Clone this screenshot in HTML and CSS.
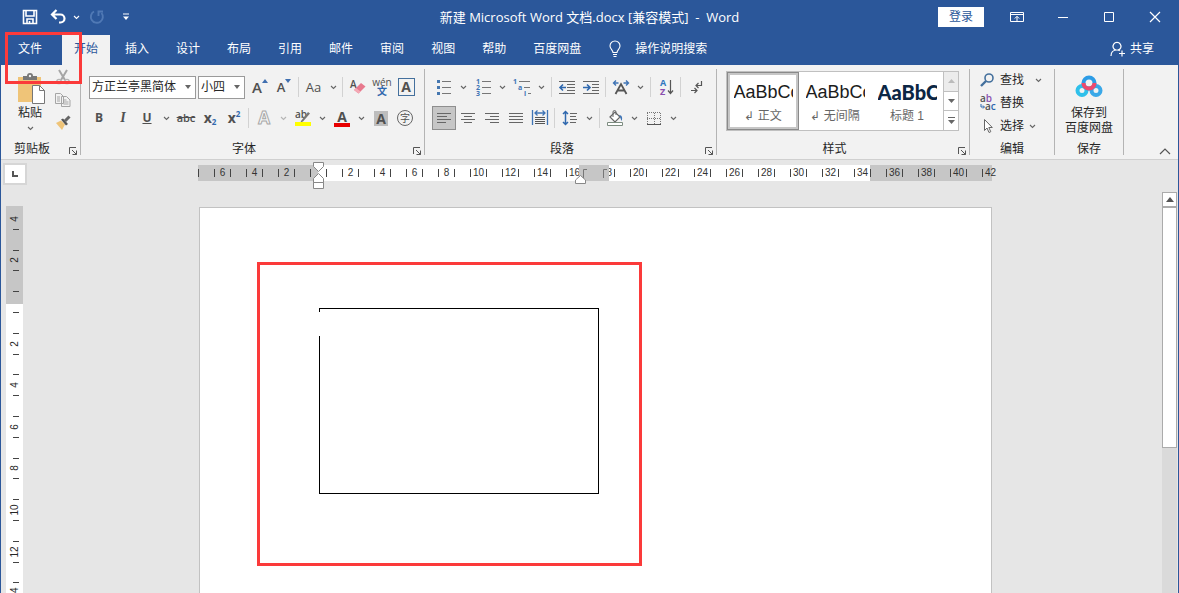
FILE: index.html
```html
<!DOCTYPE html>
<html lang="zh-CN">
	<head>
		<meta charset="utf-8" />
		<title>新建 Microsoft Word 文档.docx - Word</title>
		<link rel="stylesheet" href="styles.css">
	</head>
	<body>
		<!-- flecha pequeña de los desplegables -->
		<svg width="0" height="0" class="oculto">
			<symbol id="chev" viewBox="0 0 7 5"><path d="M1 1l2.500 2.500L6 1" fill="none" stroke="currentColor" stroke-width="1.100"/></symbol>
			<symbol id="launch" viewBox="0 0 10 10"><path d="M1.500 8V1.500H8M4 4l4.500 4.500M8.500 4.500v4h-4" fill="none" stroke="#555"/></symbol>
		</svg>

		<header class="titulo">
			<div class="rapido">
				<button class="save" aria-label="保存"><svg width="16" height="16" viewBox="0 0 16 16"><path d="M1.500 1.500h13v13h-13zM4 2v5h8V2M5 14v-4h6v4M7.500 12v2" fill="none" stroke="#fff" stroke-width="1.600"/></svg></button>
				<button class="undo" aria-label="撤消"><svg width="18" height="16" viewBox="0 0 18 16"><path d="M2 5.500h8.500a4 4 0 0 1 0 8H9M6.500 1L2 5.500 6.500 10" fill="none" stroke="#fff" stroke-width="2.200"/></svg></button>
				<button class="chev-b" aria-label="撤消选项"><svg width="7" height="5"><use href="#chev"/></svg></button>
				<button class="redo" aria-label="重复"><svg width="16" height="16" viewBox="0 0 16 16"><path d="M5 2.500A6 6 0 1 0 12.500 4M9.500 7V2.500H14" fill="none" stroke="#5079b5" stroke-width="1.900"/></svg></button>
				<button class="mas" aria-label="自定义"><svg width="8" height="8" viewBox="0 0 8 8"><path d="M1 1h6" stroke="#fff"/><path d="M1 3.500h6L4 7z" fill="#fff"/></svg></button>
			</div>
			<h1>新建 Microsoft Word 文档.docx [兼容模式]&nbsp; -&nbsp; Word</h1>
			<div class="ventana">
				<button class="login">登录</button>
				<button aria-label="功能区显示选项"><svg width="14" height="12" viewBox="0 0 14 12"><path d="M.5 1.500h13v9H.5zM.5 3.500h13M7 10V5.500M4.800 7.500L7 5.300l2.200 2.200" fill="none" stroke="#fff"/></svg></button>
				<button aria-label="最小化"><svg width="12" height="12" viewBox="0 0 12 12"><path d="M1 6.500h10" stroke="#fff"/></svg></button>
				<button aria-label="最大化"><svg width="12" height="12" viewBox="0 0 12 12"><path d="M1.500 1.500h9v9h-9z" fill="none" stroke="#fff"/></svg></button>
				<button aria-label="关闭"><svg width="12" height="12" viewBox="0 0 12 12"><path d="M1 1l10 10M11 1L1 11" stroke="#fff" stroke-width="1.200"/></svg></button>
			</div>
		</header>

		<nav class="pestanas">
			<a href="#" class="archivo">文件</a>
			<a href="#" class="activa">开始</a>
			<a href="#">插入</a>
			<a href="#">设计</a>
			<a href="#">布局</a>
			<a href="#">引用</a>
			<a href="#">邮件</a>
			<a href="#">审阅</a>
			<a href="#">视图</a>
			<a href="#">帮助</a>
			<a href="#">百度网盘</a>
			<a href="#" class="buscar"><svg width="14" height="18" viewBox="0 0 14 18"><path d="M5 12.500c0-2.500-3-3.500-3-6.500a5 5 0 0 1 10 0c0 3-3 4-3 6.500zM5 14.500h4M5.500 16.500h3" fill="none" stroke="#fff" stroke-width="1.100"/></svg>操作说明搜索</a>
			<a href="#" class="compartir"><svg width="16" height="16" viewBox="0 0 16 16"><path d="M1 15c0-4 2.500-6 6-6 1 0 2 .2 3 .8M8 9.200a4 4 0 1 0-2 0M12 9.500v6M9 12.500h6" fill="none" stroke="#fff" stroke-width="1.200"/></svg>共享</a>
			<span class="marca-archivo"></span>
		</nav>

		<section class="cinta">
			<!-- portapapeles -->
			<div class="grupo portapapeles">
				<div class="cuerpo">
					<button class="pegar">
						<svg width="30" height="32" viewBox="0 0 30 32"><path d="M3 5h23v25H3z" fill="#efc478"/><path d="M8 8V4h4a3 3 0 0 1 6 0h4v4z" fill="#777"/><circle cx="15" cy="4" r="1.200" fill="#f2f2f2"/><path d="M17.500 13.500h7l5 5v13h-12z" fill="#fff" stroke="#777"/><path d="M24.500 13.500v5h5" fill="none" stroke="#777"/></svg>
						<span>粘贴</span>
						<svg width="7" height="5"><use href="#chev"/></svg>
					</button>
					<div class="pila">
						<button aria-label="剪切"><svg width="16" height="16" viewBox="0 0 16 16"><path d="M4 1l6 10M12 1L6 11" fill="none" stroke="#a5a5a5" stroke-width="2"/><circle cx="4" cy="12.500" r="2.200" fill="none" stroke="#b5b5b5" stroke-width="1.300"/><circle cx="12" cy="12.500" r="2.200" fill="none" stroke="#b5b5b5" stroke-width="1.300"/></svg></button>
						<button aria-label="复制"><svg width="16" height="16" viewBox="0 0 16 16"><path d="M.5 1.500h5l3 3v7h-8zM6.500 4.500h5l3.500 3.500v6.500H6.500z" fill="#f2f2f2" stroke="#a5a5a5"/><path d="M2 5h3M2 7h3M2 9h3M8.500 8h3M8.500 10h5M8.500 12h5" stroke="#a5a5a5"/></svg></button>
						<button aria-label="格式刷"><svg width="16" height="16" viewBox="0 0 16 16"><path d="M1 8l5-2.500 4 4L7 15z" fill="#efc478"/><path d="M6 4.500l2-1 5 5.500-2 1.500z" fill="#555"/><path d="M10 6l4.500-4.500" stroke="#666" stroke-width="3"/></svg></button>
					</div>
				</div>
				<div class="pie">剪贴板<button class="lanzar" aria-label="剪贴板设置"><svg width="10" height="10"><use href="#launch"/></svg></button></div>
			</div>

			<!-- fuente -->
			<div class="grupo fuente">
				<div class="cuerpo filas">
					<div class="fila">
						<button class="combo nombre">方正兰亭黑简体<i></i></button>
						<button class="combo tam">小四<i></i></button>
						<button class="ic a1">A<svg width="6" height="4" viewBox="0 0 6 4"><path d="M0 4l3-4 3 4z" fill="#3f6fb0"/></svg></button>
						<button class="ic a2">A<svg width="6" height="4" viewBox="0 0 6 4"><path d="M0 0l3 4 3-4z" fill="#3f6fb0"/></svg></button>
						<hr>
						<button class="split aa"><span>Aa</span><svg width="7" height="5"><use href="#chev"/></svg></button>
						<hr>
						<button class="ic borrar" aria-label="清除格式"><svg width="18" height="18" viewBox="0 0 18 18"><text x="1" y="10" class="t11">A</text><path d="M5 12l7-7 4.500 3.500-7 7z" fill="#e8798d"/><path d="M5 12l2-2 4.500 3.500-2 2z" fill="#f4a9b5"/></svg></button>
						<button class="ic wen"><span>wén</span><b>文</b></button>
						<button class="ic"><span class="marco">A</span></button>
					</div>
					<div class="fila">
						<button class="ic"><b>B</b></button>
						<button class="ic cursiva">I</button>
						<button class="split"><span class="sub">U</span><svg width="7" height="5"><use href="#chev"/></svg></button>
						<button class="ic tachado">abc</button>
						<button class="ic equis"><b>x</b><small class="abajo">2</small></button>
						<button class="ic equis"><b>x</b><small class="arriba">2</small></button>
						<hr>
						<button class="split gris"><span class="hueca">A</span><svg width="7" height="5"><use href="#chev"/></svg></button>
						<button class="split"><svg width="18" height="18" viewBox="0 0 18 18"><text x="1" y="9" class="t11">ab</text><path d="M7 12l7-9 2 1.500-7 8-2.500 1z" fill="#777"/><path d="M1 13h16v4H1z" fill="#ff0"/></svg><svg width="7" height="5"><use href="#chev"/></svg></button>
						<button class="split"><span class="color">A</span><svg width="7" height="5"><use href="#chev"/></svg></button>
						<button class="ic"><span class="sombra">A</span></button>
						<button class="ic"><span class="circulo">字</span></button>
					</div>
				</div>
				<div class="pie">字体<button class="lanzar" aria-label="字体设置"><svg width="10" height="10"><use href="#launch"/></svg></button></div>
			</div>

			<!-- párrafo -->
			<div class="grupo parrafo">
				<div class="cuerpo filas">
					<div class="fila">
						<button class="split" aria-label="项目符号"><svg width="18" height="18" viewBox="0 0 18 18"><path d="M7 3.500h9M7 9.500h9M7 15.500h9" stroke="#777"/><path d="M2 2h3v3H2zM2 8h3v3H2zM2 14h3v3H2z" fill="#4577b0"/></svg><svg width="7" height="5"><use href="#chev"/></svg></button>
						<button class="split" aria-label="编号"><svg width="18" height="18" viewBox="0 0 18 18"><path d="M8 3.500h9M8 9.500h9M8 15.500h9" stroke="#777"/><text x="2" y="6" class="t7">1</text><text x="2" y="12" class="t7">2</text><text x="2" y="18" class="t7">3</text></svg><svg width="7" height="5"><use href="#chev"/></svg></button>
						<button class="split" aria-label="多级列表"><svg width="18" height="18" viewBox="0 0 18 18"><path d="M6 3.500h11M11 9.500h6M15 15.500h3" stroke="#777"/><text x="0" y="6" class="t7">1</text><text x="5" y="12" class="t7">a</text><text x="11" y="18" class="t7">i</text></svg><svg width="7" height="5"><use href="#chev"/></svg></button>
						<hr>
						<button class="ic" aria-label="减少缩进"><svg width="18" height="16" viewBox="0 0 18 16"><path d="M1 2.500h16M9 5.500h8M9 8.500h8M9 11.500h8M1 14.500h16" stroke="#666"/><path d="M8 8.500H2M5 5.500l-3 3 3 3" fill="none" stroke="#2f68ae" stroke-width="1.600"/></svg></button>
						<button class="ic" aria-label="增加缩进"><svg width="18" height="16" viewBox="0 0 18 16"><path d="M1 2.500h16M10 5.500h7M10 8.500h7M10 11.500h7M1 14.500h16" stroke="#666"/><path d="M1 8.500h7M5 5.500l3 3-3 3" fill="none" stroke="#2f68ae" stroke-width="1.600"/></svg></button>
						<hr>
						<button class="split" aria-label="中文版式"><svg width="18" height="16" viewBox="0 0 18 16"><path d="M3.500 15L9 5l5.500 10M5.500 11.500h7" fill="none" stroke="#555" stroke-width="1.800"/><path d="M6.500 4H2M4 1.500L1.500 4 4 6.500M11.500 4H16M14 1.500L16.500 4 14 6.500" fill="none" stroke="#3f74b5" stroke-width="1.400"/></svg><svg width="7" height="5"><use href="#chev"/></svg></button>
						<hr>
						<button class="ic" aria-label="排序"><svg width="18" height="18" viewBox="0 0 18 18"><text x="3" y="8" class="az">A</text><text x="3" y="17" class="az z">Z</text><path d="M13.500 2v13M11 12.500l2.500 3 2.500-3" fill="none" stroke="#555" stroke-width="1.200"/></svg></button>
						<hr>
						<button class="ic" aria-label="显示编辑标记"><svg width="16" height="16" viewBox="0 0 16 16"><path d="M13.500 2v4.500H8M10.500 4L8 6.500 10.500 9M3 11.500h6M6.500 9L9 11.500 6.500 14" fill="none" stroke="#555" stroke-width="1.200"/></svg></button>
					</div>
					<div class="fila">
						<button class="ic pulsado" aria-label="左对齐"><svg width="16" height="14" viewBox="0 0 16 14"><path d="M1 2.500h14M1 5.500h10M1 8.500h14M1 11.500h9" stroke="#666"/></svg></button>
						<button class="ic" aria-label="居中"><svg width="16" height="14" viewBox="0 0 16 14"><path d="M1 2.500h14M4 5.500h8M1 8.500h14M4 11.500h8" stroke="#666"/></svg></button>
						<button class="ic" aria-label="右对齐"><svg width="16" height="14" viewBox="0 0 16 14"><path d="M1 2.500h14M6 5.500h9M1 8.500h14M6 11.500h9" stroke="#666"/></svg></button>
						<button class="ic" aria-label="两端对齐"><svg width="16" height="14" viewBox="0 0 16 14"><path d="M1 2.500h14M1 5.500h14M1 8.500h14M1 11.500h14" stroke="#666"/></svg></button>
						<button class="ic" aria-label="分散对齐"><svg width="18" height="18" viewBox="0 0 18 18"><path d="M1.500 1v15M16.500 1v15M4 4h10M6.500 1.500L4 4l2.500 2.500M11.500 1.500L14 4l-2.500 2.500" fill="none" stroke="#3f74b5" stroke-width="1.300"/><path d="M4 8.500h10M4 10.500h10M4 12.500h10M4 14.500h10" stroke="#555"/></svg></button>
						<hr>
						<button class="split" aria-label="行距"><svg width="16" height="16" viewBox="0 0 16 16"><path d="M8 3.500h7M8 6.500h6M8 9.500h7M8 12.500h6" stroke="#666"/><path d="M3.500 1.500v13M1 4l2.500-2.500L6 4M1 12l2.500 2.500L6 12" fill="none" stroke="#2f68ae" stroke-width="1.500"/></svg><svg width="7" height="5"><use href="#chev"/></svg></button>
						<hr>
						<button class="split" aria-label="底纹"><svg width="18" height="18" viewBox="0 0 18 18"><path d="M4 8l5-5 5 5-5 5z" fill="#fff" stroke="#666" stroke-width="1.200"/><path d="M7 8V3a1.500 1.500 0 0 1 3 0v3" fill="none" stroke="#666"/><path d="M13 6c3 0 4 3 2.500 6L14 8z" fill="#3f74b5"/><path d="M1.500 13.500h15v3h-15z" fill="#fff" stroke="#7d8c80"/></svg><svg width="7" height="5"><use href="#chev"/></svg></button>
						<button class="split" aria-label="边框"><svg width="16" height="16" viewBox="0 0 16 16"><path d="M1 2.500h14M1 8.500h14M1.500 3v12M8.500 3v12M14.500 3v12" stroke="#777" stroke-dasharray="1 1"/><path d="M1 14.500h14" stroke="#555"/></svg><svg width="7" height="5"><use href="#chev"/></svg></button>
					</div>
				</div>
				<div class="pie">段落<button class="lanzar" aria-label="段落设置"><svg width="10" height="10"><use href="#launch"/></svg></button></div>
			</div>

			<!-- estilos -->
			<div class="grupo estilos">
				<div class="cuerpo">
					<div class="galeria">
						<button class="estilo elegido"><span class="muestra">AaBbCc</span><span>↲ 正文</span></button>
						<button class="estilo"><span class="muestra">AaBbCc</span><span>↲ 无间隔</span></button>
						<button class="estilo"><span class="muestra tit">AaBbCc</span><span>标题 1</span></button>
						<div class="subebaja">
							<button class="apagado" aria-label="上"><svg width="7" height="4" viewBox="0 0 7 4"><path d="M0 4l3.500-4L7 4z" fill="#bbb"/></svg></button>
							<button aria-label="下"><svg width="7" height="4" viewBox="0 0 7 4"><path d="M0 0l3.500 4L7 0z" fill="#666"/></svg></button>
							<button aria-label="其他"><svg width="7" height="7" viewBox="0 0 7 7"><path d="M0 .5h7" stroke="#666"/><path d="M0 3l3.500 4L7 3z" fill="#666"/></svg></button>
						</div>
					</div>
				</div>
				<div class="pie">样式<button class="lanzar" aria-label="样式设置"><svg width="10" height="10"><use href="#launch"/></svg></button></div>
			</div>

			<!-- edición -->
			<div class="grupo edicion">
				<div class="cuerpo">
					<button><svg width="14" height="14" viewBox="0 0 14 14"><circle cx="9" cy="5" r="4" fill="none" stroke="#44709d" stroke-width="1.600"/><path d="M6 8l-5 5" stroke="#44709d" stroke-width="2.400"/></svg>查找<svg class="ch lejos" width="7" height="5"><use href="#chev"/></svg></button>
					<button><svg width="16" height="16" viewBox="0 0 16 16"><text x="0" y="7" class="t11">a<tspan fill="#8a4fae">b</tspan></text><text x="5" y="15" class="t11">a<tspan fill="#2f68ae">c</tspan></text><path d="M1 9v3h3M3 10.500L4.500 12 3 13.500" fill="none" stroke="#2f68ae"/></svg>替换</button>
					<button><svg width="14" height="16" viewBox="0 0 14 16"><path d="M4.500 1.500v11l2.500-2.500 2 4.500 1.800-.8-2-4.200h3.500z" fill="#fff" stroke="#666"/></svg>选择<svg class="ch" width="7" height="5"><use href="#chev"/></svg></button>
				</div>
				<div class="pie">编辑</div>
			</div>

			<!-- baidu -->
			<div class="grupo nube">
				<div class="cuerpo">
					<button>
						<svg width="28" height="24" viewBox="0 0 28 24"><circle cx="7" cy="15.500" r="4.500" fill="none" stroke="#2fc0ea" stroke-width="4"/><circle cx="21" cy="15.500" r="4.500" fill="none" stroke="#3aa8e8" stroke-width="4"/><circle cx="14" cy="8" r="5.500" fill="none" stroke="#2c9ce6" stroke-width="4"/><path d="M8.500 8a5.500 5.500 0 0 0 11 0" fill="none" stroke="#ee4a6d" stroke-width="4"/></svg>
						<span>保存到</span><span>百度网盘</span>
					</button>
				</div>
				<div class="pie">保存</div>
			</div>
			<button class="plegar" aria-label="折叠功能区"><svg width="12" height="7" viewBox="0 0 12 7"><path d="M1 6l5-5 5 5" fill="none" stroke="#555" stroke-width="1.200"/></svg></button>
		</section>

		<main class="zona">
			<div class="lado">
				<button class="tabulador" aria-label="制表符"><svg width="8" height="8" viewBox="0 0 8 8"><path d="M2 1v5h5" fill="none" stroke="#555" stroke-width="2"/></svg></button>
				<div class="regla-v" id="reglaV"></div>
			</div>
			<div class="centro">
				<div class="regla-h" id="reglaH">
					<svg class="sangria" width="12" height="28" viewBox="0 0 12 28"><path d="M.5.5h10v4l-5 5-5-5zM.5 20.500v-4l5-5 5 5v4zM.5 20.500h10v6H.5z" fill="#fff" stroke="#888"/></svg>
					<div class="columna"><svg width="30" height="16" viewBox="0 0 30 16"><path d="M4.500 13V4.500H8M24.500 13V4.500H28" fill="none" stroke="#777"/></svg></div>
					<svg class="derecha" width="12" height="10" viewBox="0 0 12 10"><path d="M.5 8.500V5l5-4.500 5 4.500v3.500z" fill="#fff" stroke="#888"/></svg>
				</div>
				<article class="hoja">
					<div class="recuadro">
						<div class="cuadro"></div>
					</div>
				</article>
			</div>
			<div class="barra">
				<button aria-label="向上滚动"><svg width="8" height="5" viewBox="0 0 8 5"><path d="M0 5l4-5 4 5z" fill="#555"/></svg></button>
				<div class="pulgar"></div>
			</div>
		</main>

		<script type="text/javascript">
			//números de la regla: el 0 no se escribe
			function celdas(id, desde, hasta) {
				var r = document.getElementById(id);
				for (var n = desde; n <= hasta; n += 2) {
					var c = document.createElement("div");
					c.className = "celda";
					c.innerHTML = "<i></i><span>" + (n == 0 ? "" : Math.abs(n)) + "</span><i></i>";
					r.appendChild(c);
				}
			}
			celdas("reglaH", -6, 42);
			celdas("reglaV", -4, 14);
		</script>
	</body>
</html>
```
FILE: styles.css
```css
* {
	margin: 0;
	padding: 0;
	box-sizing: border-box;
}
body {
	display: flex;
	flex-direction: column;
	height: 100vh;
	overflow: hidden;
	background-color: #e6e6e6;
	border: 1px solid #2b579a;
	border-width: 0 1px;
	color: #262626;
	font: 12px/16px "Liberation Sans", "Noto Sans CJK SC", sans-serif;
}
button {
	display: flex;
	align-items: center;
	justify-content: center;
	background: none;
	border: 0;
	color: inherit;
	font: inherit;
	white-space: nowrap;
}
svg {
	flex: none;
	overflow: visible;
}
.oculto {
	position: absolute;
}

/*barra de titulo*/
.titulo {
	display: grid;
	grid-template-columns: 1fr auto 1fr;
	align-items: center;
	height: 34px;
	flex: none;
	background-color: #2b579a;
	color: #fff;
}
.titulo h1 {
	font: 13px/16px "Open Sans", "Noto Sans CJK SC", sans-serif;
}
.rapido {
	display: flex;
	align-items: center;
	padding-left: 21px;
}
.rapido .undo {
	margin-left: 12px;
}
.rapido .chev-b {
	margin-left: 5px;
}
.rapido .redo {
	margin-left: 9px;
}
.rapido .mas {
	margin-left: 17px;
}
.ventana {
	display: flex;
	justify-content: flex-end;
	align-items: center;
}
.ventana button {
	width: 46px;
	height: 20px;
}
.ventana .login {
	background-color: #fff;
	color: #2b579a;
	margin-right: 10px;
}

/*pestañas*/
.pestanas {
	display: flex;
	position: relative;
	gap: 3px;
	height: 31px;
	flex: none;
	padding-top: 1px;
	background-color: #2b579a;
}
.pestanas a {
	padding: 0 12px;
	color: #fff;
	line-height: 28px;
	text-decoration: none;
	white-space: nowrap;
}
.pestanas .archivo {
	padding-left: 17px;
	padding-right: 17px;
}
.pestanas .activa {
	background-color: #f2f2f2;
	color: #2b579a;
}
.pestanas .buscar, .pestanas .compartir {
	display: flex;
	align-items: center;
	height: 28px;
	gap: 13px;
}
.pestanas .compartir {
	gap: 4px;
	margin-left: auto;
	padding-right: 24px;
}
.marca-archivo {
	position: absolute;
	z-index: 2;
	left: 4px;
	top: -2px;
	width: 77px;
	height: 52px;
	border: 3px solid #fb3a3a;
}

/*cinta*/
.cinta {
	display: flex;
	height: 95px;
	flex: none;
	padding: 4px 0;
	background-color: #f2f2f2;
	border-bottom: 1px solid #d0d0d0;
	color: #262626;
}
.cinta use {
	color: #666;
}
.grupo {
	display: flex;
	flex-direction: column;
	flex: none;
	border-right: 1px solid #b4b4b4;
}
.cuerpo {
	flex: 1;
	display: flex;
}
.pie {
	position: relative;
	height: 16px;
	line-height: 20px;
	text-align: center;
}
.lanzar {
	position: absolute;
	right: 2px;
	bottom: -1px;
}
.portapapeles { width: 80px; }
.fuente { width: 344px; }
.parrafo { width: 292px; }
.estilos { width: 253px; }
.edicion { width: 85px; }
.nube { width: 69px; }

.portapapeles .pie, .fuente .pie, .parrafo .pie {
	padding-right: 17px;
}
.pegar {
	flex-direction: column;
	justify-content: flex-start;
	width: 58px;
	padding-top: 3px;
}
.pegar span {
	line-height: 18px;
	margin-bottom: 4px;
}
.pila {
	display: flex;
	flex-direction: column;
	gap: 7px;
	padding: 2px 0 0 -4px;
	margin-left: -4px;
}

.filas {
	flex-direction: column;
	gap: 7px;
	padding: 6px 0 0 6px;
}
.parrafo .filas {
	padding-left: 7px;
}
.fila {
	display: flex;
	align-items: center;
	height: 24px;
	color: #505050;
}
.fila hr {
	width: 1px;
	height: 20px;
	margin: 0 3px 0 2px;
	border: 0;
	background-color: #d2d2d2;
}
.ic {
	width: 24px;
	height: 24px;
}
.split {
	width: 39px;
	height: 24px;
	display: grid;
	grid-template-columns: 24px 15px;
	justify-items: center;
}
.combo {
	height: 23px;
	margin-left: 2px;
	padding: 0 4px 0 2px;
	justify-content: space-between;
	background-color: #fff;
	border: 1px solid #9a9a9a;
	color: #262626;
}
.combo i {
	border: 3px solid transparent;
	border-top: 4px solid #666;
	border-bottom: 0;
}
.nombre { width: 107px; }
.tam { width: 47px; margin-right: 3px; }
.fila .ic, .split span {
	font-family: "Open Sans", "Noto Sans CJK SC", sans-serif;
}
.fila .a1, .fila .a2 {
	align-items: flex-start;
	font-size: 15px;
	font-weight: 600;
	line-height: 24px;
}
.fila .a2 {
	font-size: 13px;
}
.a1 svg, .a2 svg {
	margin-top: 4px;
}
.split.aa {
	width: 38px;
}
.split.aa span {
	font-size: 13px;
}
.fila .wen {
	flex-direction: column;
	font-size: 10px;
	line-height: 9px;
}
.wen b {
	color: #2f68ae;
}
.marco {
	width: 17px;
	border: 1px solid #44709d;
	font-weight: 700;
	font-size: 14px;
	line-height: 16px;
}
.fila .cursiva {
	font: italic bold 14px "Liberation Serif", serif;
}
.sub {
	font-weight: 700;
	text-decoration: underline;
}
.tachado {
	text-decoration: line-through;
	font-size: 11px;
	font-weight: 600;
}
.equis {
	font-size: 14px;
}
.equis small {
	font-size: 8px;
	color: #2f68ae;
	font-weight: 700;
}
.abajo { padding-top: 8px; }
.arriba { padding-bottom: 8px; }
.gris use {
	color: #b5b5b5;
}
.hueca {
	font-size: 17px;
	font-weight: 700;
	color: #f8f8f8;
	-webkit-text-stroke: 1px #a8a8a8;
}
.color {
	width: 16px;
	height: 17px;
	border-bottom: 4px solid #e80000;
	font-size: 14px;
	font-weight: 700;
	line-height: 14px;
}
.sombra {
	width: 14px;
	background-color: #bdbdbd;
	font-size: 14px;
	font-weight: 700;
	line-height: 15px;
}
.circulo {
	width: 16px;
	height: 16px;
	border: 1px solid #666;
	border-radius: 50%;
	font-size: 10px;
	line-height: 14px;
}
.pulsado {
	background-color: #c6c6c6;
	border: 1px solid #8e8e8e;
}
.t11 { font: 600 10px "Open Sans", sans-serif; fill: #505050; }
.t7 { font: bold 7px "Open Sans", sans-serif; fill: #3f74b5; }
.az { font: bold 9px "Open Sans", sans-serif; fill: #2f78c0; }
.z { fill: #8a4fae; }

/*galeria de estilos*/
.galeria {
	display: flex;
	height: 60px;
	margin: 2px 0 0 9px;
	background-color: #fff;
	border: 1px solid #c0c0c0;
}
.estilo {
	width: 72px;
	flex-direction: column;
	padding: 2px 6px 0;
	color: #666;
}
.muestra {
	width: 59px;
	overflow: hidden;
	margin-bottom: 5px;
	color: #1c1c1c;
	font-size: 18px;
	line-height: 22px;
	text-align: left;
}
.tit {
	color: #0b2644;
	font-family: Lato, sans-serif;
	font-size: 20px;
	font-weight: 900;
}
.elegido {
	border: 1px solid #8a8a8a;
	box-shadow: inset 0 0 0 2px #c6c6c6;
}
.subebaja {
	display: flex;
	flex-direction: column;
	width: 15px;
	border-left: 1px solid #c0c0c0;
}
.subebaja button {
	flex: 1;
}
.subebaja button + button {
	border-top: 1px solid #c0c0c0;
}
.subebaja .apagado {
	background-color: #ececec;
}
.estilos .pie {
	padding-right: 17px;
}

.edicion .cuerpo {
	flex-direction: column;
	gap: 7px;
	padding: 3px 0 0 10px;
}
.edicion button {
	display: grid;
	grid-template-columns: 20px 24px auto;
	align-items: center;
	justify-content: start;
	justify-items: start;
	height: 16px;
}
.edicion .ch {
	margin-left: 5px;
}
.edicion .lejos {
	margin-left: 11px;
}
.nube button {
	width: 100%;
	flex-direction: column;
	justify-content: flex-start;
	padding-top: 6px;
	line-height: 15px;
}
.nube svg {
	margin-bottom: 7px;
}
.plegar {
	margin: auto 7px 0 auto;
}

/*zona del documento*/
.zona {
	flex: 1;
	min-height: 0;
	display: flex;
	overflow: hidden;
}
.lado {
	flex: none;
	width: 27px;
	padding: 3px 0 0 2px;
}
.tabulador {
	width: 24px;
	height: 22px;
	background-color: #fff;
	border: 2px solid #d6d6d6;
}
.regla-v {
	display: grid;
	grid-auto-rows: 1fr;
	width: 17px;
	height: 419px;
	margin: 21px 0 0 3px;
	padding-top: 3px;
	background: linear-gradient(#c6c6c6 98px, #fff 98px);
}
.regla-v .celda {
	display: grid;
	grid-template-rows: 1fr 1px 1fr 1px;
	justify-items: center;
}
.regla-v i {
	width: 6px;
	background-color: #444;
	margin-left: 2px;
}
.regla-v i:first-child {
	grid-row: 2;
}
.regla-v i:last-child {
	grid-row: 4;
}
.regla-v span {
	grid-row: 1;
	align-self: center;
	font-size: 10px;
	line-height: 10px;
	transform: rotate(-90deg);
}

.centro {
	flex: 1;
	display: flex;
	flex-direction: column;
	align-items: center;
}
.regla-h {
	position: relative;
	display: flex;
	flex: none;
	width: 794px;
	height: 16px;
	margin-top: 5px;
	padding-left: 8px;
	background: linear-gradient(to right, #c6c6c6 120px, #fff 120px, #fff 672px, #c6c6c6 672px);
}
/*primera marca de la regla*/
.regla-h::before {
	content: "";
	position: absolute;
	left: 0;
	top: 4px;
	width: 1px;
	height: 8px;
	background-color: #444;
}
.regla-h .celda {
	flex: none;
	display: grid;
	grid-template-columns: 1px 15px 1px;
	align-items: center;
	width: 32px;
	padding-left: 8px;
}
.regla-h i {
	height: 8px;
	background-color: #444;
}
.regla-h span {
	font-size: 10px;
	text-align: center;
	line-height: 16px;
	color: #333;
}
.regla-h .celda:last-child i:last-child {
	display: none;
}
.sangria {
	position: absolute;
	left: 115px;
	top: -3px;
}
.columna {
	position: absolute;
	left: 381px;
	top: 0;
	width: 30px;
	height: 16px;
	background-color: #c6c6c6;
}
.derecha {
	position: absolute;
	left: 377px;
	top: 10px;
}
.hoja {
	width: 793px;
	flex: 1;
	margin: 26px 0 0 1px;
	background-color: #fff;
	border: 1px solid #c2c2c2;
	border-bottom: 0;
}
.recuadro {
	width: 385px;
	height: 304px;
	margin: 54px 0 0 57px;
	padding: 43px 0 0 59px;
	border: 3px solid #fb3a3a;
}
.cuadro {
	position: relative;
	width: 280px;
	height: 186px;
	border: 1px solid #000;
}
/*hueco del borde izquierdo*/
.cuadro::before {
	content: "";
	position: absolute;
	left: -1px;
	top: 3px;
	width: 1px;
	height: 24px;
	background-color: #fff;
}

.barra {
	width: 15px;
	margin: 32px 1px 0 0;
	display: flex;
	flex-direction: column;
	background-color: #dadada;
}
.barra button {
	height: 15px;
	background-color: #fff;
	border: 1px solid #ababab;
}
.pulgar {
	height: 241px;
	background-color: #fff;
	border: 1px solid #ababab;
}
```
